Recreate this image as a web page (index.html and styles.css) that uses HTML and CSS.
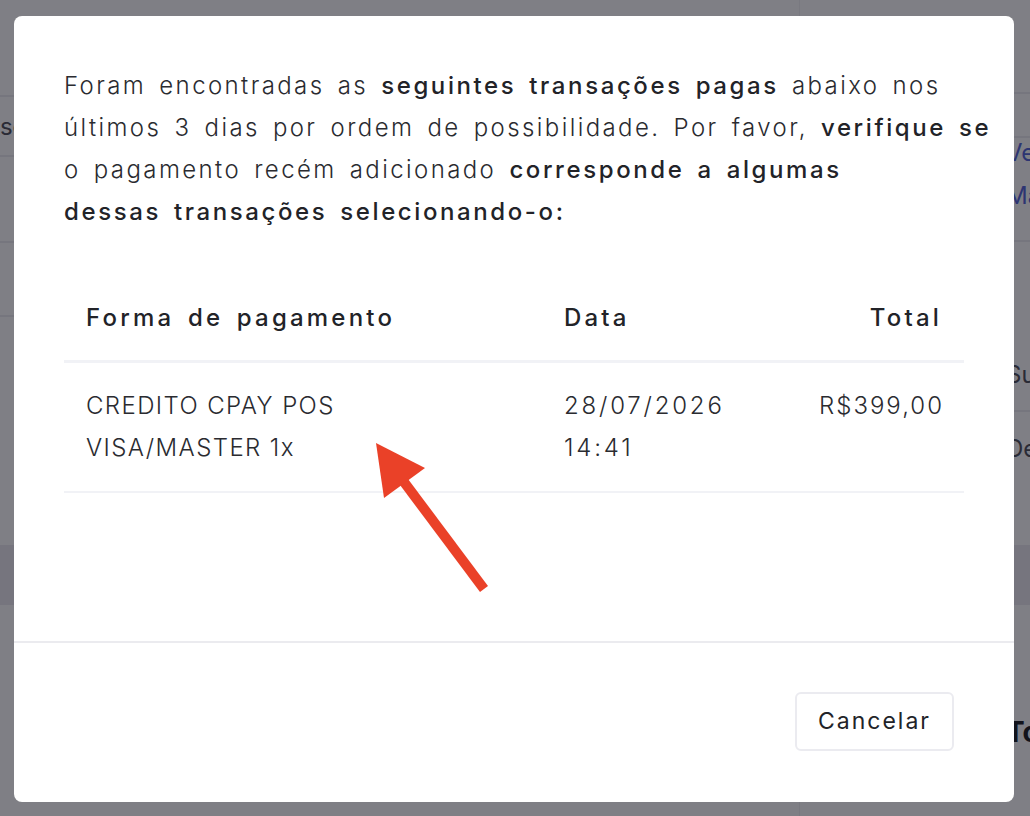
FILE: index.html
```html
<!DOCTYPE html>
<html lang="pt-BR">
<head>
    <meta charset="UTF-8">
    <meta name="viewport" content="width=device-width, initial-scale=1.0">
    <title>Conciliar pagamento</title>
    <link rel="stylesheet" href="styles.css">
</head>
<body>
    <div class="page">
        <div class="page-left">
            <div class="page-row tall"><span class="faint shifted">Buscar</span></div>
            <div class="page-row"></div>
            <div class="page-row short"></div>
            <div class="page-row xl"></div>
            <div class="page-band"></div>
        </div>
        <div class="page-right">
            <div class="page-row top"></div>
            <div class="page-row links"><span class="link">Ver</span><span class="link">Marcar</span></div>
            <div class="page-row mid"><span class="faint">Subtotal</span></div>
            <div class="page-row mini"><span class="faint">Desconto</span></div>
            <div class="page-band"></div>
            <div class="page-total">Total</div>
        </div>
    </div>

    <div class="backdrop"></div>

    <div class="modal">
        <div class="modal-body">
            <p class="intro">
                Foram encontradas as <strong>seguintes transações pagas</strong> abaixo nos<br>
                últimos 3 dias por ordem de possibilidade. Por favor, <strong>verifique se</strong><br>
                o pagamento recém adicionado <strong>corresponde a algumas<br>
                dessas transações selecionando-o:</strong>
            </p>

            <table class="tx-table">
                <thead>
                    <tr>
                        <th class="col-method">Forma de pagamento</th>
                        <th class="col-date">Data</th>
                        <th class="col-total">Total</th>
                    </tr>
                </thead>
                <tbody>
                    <tr>
                        <td class="cell-method">CREDITO CPAY POS VISA/MASTER 1x</td>
                        <td class="cell-date">28/07/2026 14:41</td>
                        <td class="col-total cell-total">R$399,00</td>
                    </tr>
                </tbody>
            </table>

            <svg class="pointer" width="140" height="170" viewBox="0 0 140 170">
                <line x1="44" y1="52" x2="124" y2="159" stroke="#ea4128" stroke-width="10"/>
                <polygon points="16,13 65,38 24,68" fill="#ea4128"/>
            </svg>
        </div>
        <div class="modal-footer">
            <button class="btn">Cancelar</button>
        </div>
    </div>
</body>
</html>
```

FILE: styles.css
```css
* {
    margin: 0;
    padding: 0;
    box-sizing: border-box;
}
body {
    width: 100%;
    height: 100vh;
    overflow: hidden;
    background: #ffffff;
    font-family: Inter, "Noto Sans", sans-serif;
    color: #26272b;
}

/* page behind the dialog */
.page {
    display: grid;
    grid-template-columns: 800px 1fr;
    height: 100%;
}
.page-left {
    padding-top: 95px;
    border-right: 1px solid #f2f2f5;
    overflow: hidden;
}
.page-right {
    padding-top: 92px;
    overflow: hidden;
}
.page-row {
    height: 60px;
    border-top: 2px solid #ececf0;
    display: flex;
    align-items: center;
    font-size: 24px;
    white-space: nowrap;
}
.page-left .page-row:nth-child(2) { height: 86px; }
.page-row.short { height: 74px; }
.page-row.xl { height: 110px; }
.page-row.top { height: 44px; }
.page-row.links {
    height: 104px;
    flex-direction: column;
    align-items: flex-start;
    justify-content: flex-start;
    gap: 14px;
    padding-left: 206px;
    line-height: 29px;
}
.page-row.mid { height: 170px; padding-left: 206px; padding-top: 96px; }
.page-row.mini { height: 75px; padding-left: 206px; }
.page-band {
    height: 60px;
    margin-top: 120px;
    background: #ecebf0;
}
.page-right .page-band { margin-top: 60px; }
.page-total {
    padding: 110px 0 0 206px;
    font-size: 28px;
    font-weight: 700;
}
.faint {
    color: #555660;
}
.shifted {
    margin-left: -30px;
}
.link {
    color: #5a6ad8;
    font-size: 24px;
}

.backdrop {
    position: fixed;
    inset: 0;
    background: rgba(0, 0, 12, 0.5);
}

/* dialog */
.modal {
    position: fixed;
    top: 16px;
    left: 14px;
    width: 1000px;
    height: 786px;
    background: #ffffff;
    border-radius: 8px;
    display: flex;
    flex-direction: column;
}
.modal-body {
    position: relative;
    padding: 49px 50px 0 50px;
    flex: 1;
}
.intro {
    font-size: 24px;
    line-height: 42px;
    font-weight: 300;
    color: #2a2b30;
    letter-spacing: 2.4px;
    word-spacing: 4px;
    white-space: nowrap;
}
.intro strong {
    font-weight: 500;
    color: #222328;
    letter-spacing: 2.6px;
}
.tx-table {
    width: 900px;
    margin-top: 43px;
    border-collapse: collapse;
    table-layout: fixed;
    font-size: 24px;
    line-height: 42px;
}
.tx-table th {
    text-align: left;
    font-weight: 500;
    padding: 21px 22px;
    color: #222328;
    letter-spacing: 3.2px;
    word-spacing: 4px;
    border-bottom: 3px solid #f1f2f6;
}
.tx-table td {
    font-weight: 300;
    padding: 22px 22px;
    color: #2a2b30;
    vertical-align: top;
    border-bottom: 2px solid #f1f2f6;
}
.col-method { width: 478px; }
.col-date { width: 255px; }
.tx-table .col-total { text-align: right; }
.tx-table .cell-method {
    letter-spacing: 1.4px;
    padding-right: 80px;
}
.tx-table .cell-date { letter-spacing: 2.8px; }
.tx-table .cell-total { letter-spacing: 2px; }

.pointer {
    position: absolute;
    left: 346px;
    top: 414px;
}

.modal-footer {
    border-top: 2px solid #ebebef;
    height: 161px;
    display: flex;
    align-items: center;
    justify-content: flex-end;
    padding: 0 60px 2px 0;
}
.btn {
    font-family: inherit;
    font-size: 23px;
    line-height: 33px;
    padding: 11px 21px;
    color: #222328;
    background: #ffffff;
    border: 2px solid #ebebf0;
    border-radius: 6px;
    letter-spacing: 2px;
}
```
